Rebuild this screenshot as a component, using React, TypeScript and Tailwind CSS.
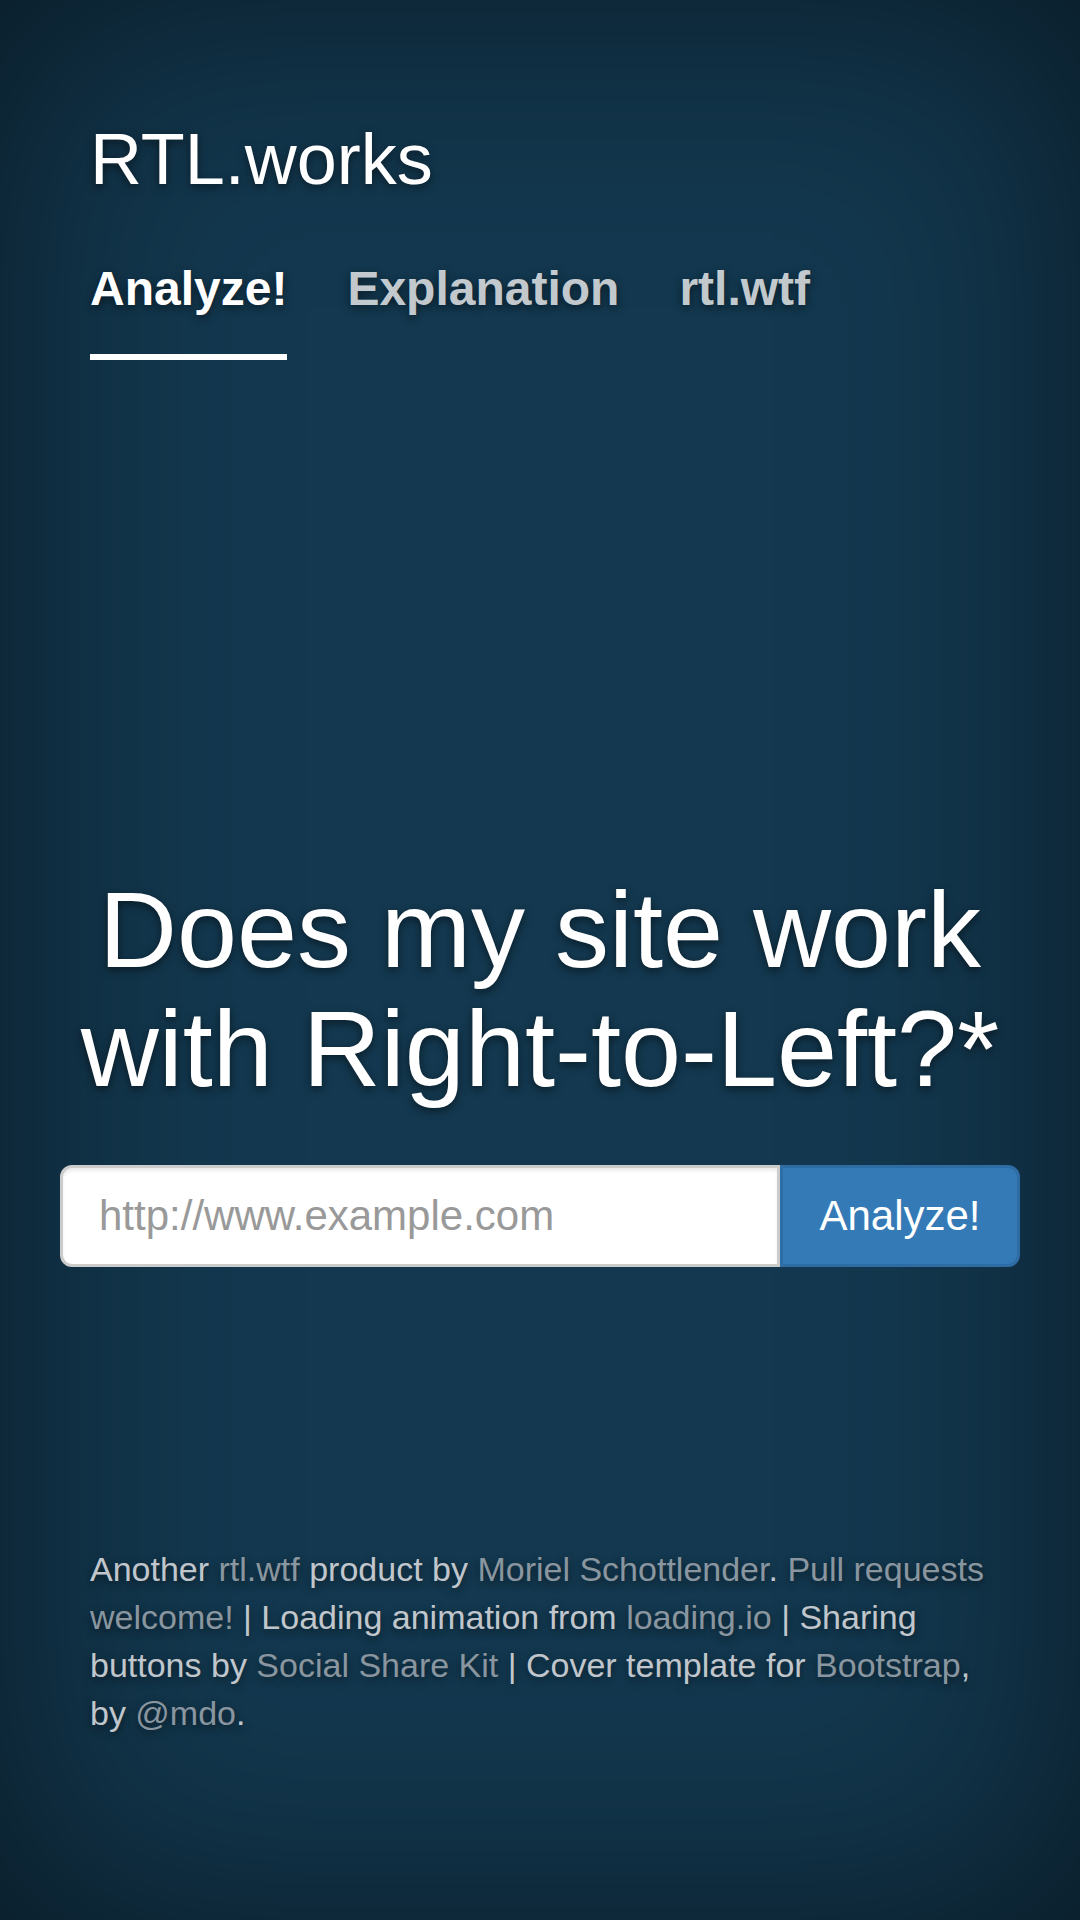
import React from 'react';

const shadow = '[text-shadow:0_3px_9px_rgba(0,0,0,0.5)]';

export default function App() {
  return (
    <div className="min-h-[1920px] w-full flex flex-col bg-[#13384f] shadow-[inset_0_0_300px_rgba(0,0,0,0.55)] text-white font-['Liberation_Sans',Arial,sans-serif]">
      {/* masthead */}
      <header className="px-[90px] pt-[120px]">
        <h3 className={`text-[72px] leading-[1.1] ${shadow}`}>RTL.works</h3>
        <nav className="flex gap-[60px] mt-[35px]">
          <a className={`text-[48px] leading-[60px] font-bold pt-[25px] pb-[35px] border-b-[6px] border-white text-white ${shadow}`}>
            Analyze!
          </a>
          <a className={`text-[48px] leading-[60px] font-bold pt-[25px] pb-[35px] border-b-[6px] border-transparent text-white/75 ${shadow}`}>
            Explanation
          </a>
          <a className={`text-[48px] leading-[60px] font-bold pt-[25px] pb-[35px] border-b-[6px] border-transparent text-white/75 ${shadow}`}>
            rtl.wtf
          </a>
        </nav>
      </header>

      <main className="mt-[511px] px-[60px]">
        <h1 className={`text-[108px] leading-[1.1] text-center ${shadow}`}>
          Does my site work with Right-to-Left?*
        </h1>
        <div className="flex mt-[56px] h-[102px]">
          <input
            type="text"
            placeholder="http://www.example.com"
            className="flex-1 min-w-0 h-full bg-white border-[3px] border-[#ccc] rounded-l-[12px] px-[36px] text-[42px] text-[#555] placeholder:text-[#999] shadow-[inset_0_3px_3px_rgba(0,0,0,0.075)] outline-none"
          />
          <button className="w-[240px] h-full bg-[#337ab7] border-[3px] border-[#2e6da4] rounded-r-[12px] text-[42px] text-white">
            Analyze!
          </button>
        </div>
      </main>

      <footer className={`mt-auto px-[90px] pb-[183px] text-[34px] leading-[48px] text-[#c0c6cb] ${shadow}`}>
        <p>
          Another <a className="text-[#8a969f]">rtl.wtf</a> product by{' '}
          <a className="text-[#8a969f]">Moriel Schottlender</a>.{' '}
          <a className="text-[#8a969f]">Pull requests welcome!</a> | Loading animation from{' '}
          <a className="text-[#8a969f]">loading.io</a> | Sharing buttons by{' '}
          <a className="text-[#8a969f]">Social Share Kit</a> | Cover template for{' '}
          <a className="text-[#8a969f]">Bootstrap</a>, by <a className="text-[#8a969f]">@mdo</a>.
        </p>
      </footer>
    </div>
  );
}
